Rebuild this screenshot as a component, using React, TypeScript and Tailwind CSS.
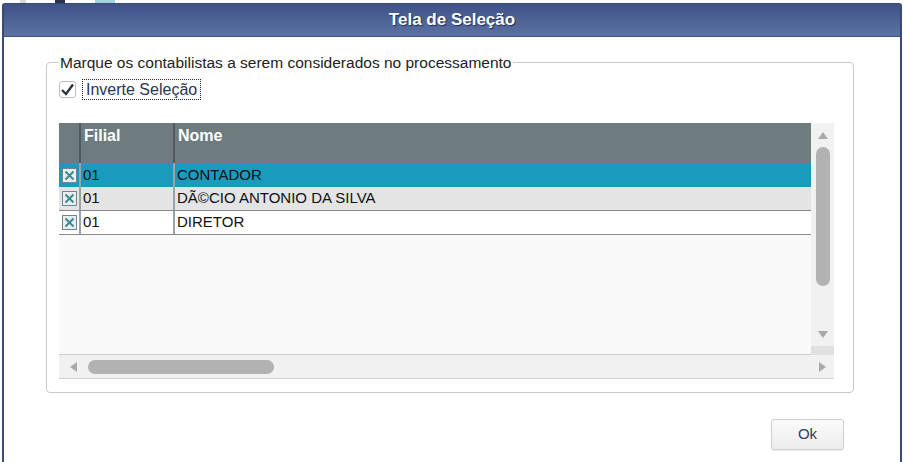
import React from "react";

const rows = [
  { filial: "01", nome: "CONTADOR" },
  { filial: "01", nome: "DÃ©CIO ANTONIO DA SILVA" },
  { filial: "01", nome: "DIRETOR" },
];

function XBox() {
  return (
    <svg width="15" height="15" viewBox="0 0 15 15">
      <rect x="0.5" y="0.5" width="14" height="14" fill="#e8eef0" stroke="#6f8790" />
      <path d="M3.5 3.5 L11.5 11.5 M11.5 3.5 L3.5 11.5" stroke="#3c8a8c" strokeWidth="2" />
    </svg>
  );
}

export default function App() {
  return (
    <div
      className="w-[905px] h-[462px] bg-white relative overflow-hidden"
      style={{ fontFamily: '"Liberation Sans", Arial, sans-serif' }}
    >
      {/* fragmentos da janela de trás */}
      <div className="h-[3px] flex">
        <div className="ml-[20px] w-[6px] bg-[#d8d8d8]" />
        <div className="ml-[29px] w-[10px] bg-[#2a3050]" />
        <div className="ml-[30px] w-[20px] bg-[#9ed3df]" />
      </div>

      <div className="ml-[2px] mr-[3px] h-[459px] flex flex-col border-l-2 border-r-2 border-t border-[#3a4a70] rounded-tl-[3px] rounded-tr-[3px]">
        {/* Barra de título */}
        <div className="h-[33px] shrink-0 flex items-center justify-center bg-gradient-to-b from-[#3f5288] to-[#5d72a3] border-b border-[#41527f]">
          <span
            className="text-white font-bold text-[17px]"
            style={{ textShadow: "1px 1px 1px #1d2a4a" }}
          >
            Tela de Seleção
          </span>
        </div>

        <div className="flex-1 flex flex-col px-[42px] pt-[17px] text-[#333] text-[15px]">
          {/* Group box */}
          <fieldset className="border border-[#c8c8c8] rounded-[4px] w-[808px] h-[339px] px-[12px] pt-0 pb-[12px] m-0">
            <legend className="ml-[-1px] px-[2px] text-[15.5px] leading-[17px] text-[#222]">
              Marque os contabilistas a serem considerados no processamento
            </legend>

            <div className="flex items-center gap-[6px] mt-[7px] h-[22px]">
              <div className="w-[17px] h-[17px] border border-[#bdbdbd] rounded-[3px] bg-white flex items-center justify-center">
                <svg width="15" height="13" viewBox="0 0 15 13">
                  <path d="M2 7 L6 11 L13 1.5" fill="none" stroke="#2b3540" strokeWidth="2.4" />
                </svg>
              </div>
              <span className="border border-dotted border-[#222] px-[3px] text-[16px] leading-[19px] text-[#2c3650]">
                Inverte Seleção
              </span>
            </div>

            {/* Grid */}
            <div className="mt-[23px] w-[775px] h-[256px] flex flex-col">
              <div className="flex flex-1 min-h-0">
                <div className="flex-1 flex flex-col bg-[#f9f9f9] border-b border-[#c9cfd0]">
                  <div className="flex h-[40px] bg-[#6e7b7f] text-white font-bold text-[16px]">
                    <div className="w-[22px] border-r-2 border-[#4f5a5d]" />
                    <div className="w-[94px] pl-[3px] pt-[1px] border-r-2 border-[#4f5a5d]">Filial</div>
                    <div className="flex-1 pl-[3px] pt-[1px]">Nome</div>
                  </div>
                  {rows.map((r, i) => (
                    <div
                      key={i}
                      className={
                        "flex h-[24px] items-center text-[15px] text-[#111] " +
                        (i === 0
                          ? "bg-[#1a9bbd]"
                          : i === 1
                          ? "bg-[#e4e4e4] border-b border-[#8a8a8a]"
                          : "bg-white border-b border-[#8a8a8a]")
                      }
                    >
                      <div className="w-[22px] h-full flex items-center justify-center border-r-2 border-[#9aa3a6]">
                        <XBox />
                      </div>
                      <div className="w-[94px] h-full flex items-center pl-[2px] border-r-2 border-[#9aa3a6]">{r.filial}</div>
                      <div className="flex-1 pl-[2px]">{r.nome}</div>
                    </div>
                  ))}
                </div>
                {/* scroll vertical */}
                <div className="w-[23px] bg-[#f1f1f1] flex flex-col items-center">
                  <div className="h-[24px] flex items-center justify-center">
                    <svg width="10" height="7" viewBox="0 0 10 7"><path d="M5 0 L10 7 L0 7 Z" fill="#a9a9a9" /></svg>
                  </div>
                  <div className="w-[14px] h-[139px] rounded-full bg-[#b2b2b2]" />
                  <div className="flex-1" />
                  <div className="h-[24px] flex items-center justify-center">
                    <svg width="10" height="7" viewBox="0 0 10 7"><path d="M0 0 L10 0 L5 7 Z" fill="#a9a9a9" /></svg>
                  </div>
                  <div className="h-[9px] w-full bg-[#e0e0e0]" />
                </div>
              </div>
              {/* scroll horizontal */}
              <div className="h-[24px] bg-[#f1f1f1] border-b border-[#d0d0d0] flex items-center">
                <div className="w-[29px] flex items-center justify-center">
                  <svg width="7" height="10" viewBox="0 0 7 10"><path d="M7 0 L7 10 L0 5 Z" fill="#a9a9a9" /></svg>
                </div>
                <div className="w-[186px] h-[14px] rounded-full bg-[#b2b2b2]" />
                <div className="flex-1" />
                <div className="w-[24px] flex items-center justify-center">
                  <svg width="7" height="10" viewBox="0 0 7 10"><path d="M0 0 L7 5 L0 10 Z" fill="#a9a9a9" /></svg>
                </div>
              </div>
            </div>
          </fieldset>

          <div className="flex justify-end w-[808px] mt-[26px] pr-[10px]">
            <button className="w-[73px] h-[31px] rounded-[3px] border border-[#cfcfcf] bg-gradient-to-b from-[#fbfbfb] to-[#ececec] text-[15px] text-[#2e3f5c] shadow-[0_1px_1px_rgba(0,0,0,0.08)]">
              Ok
            </button>
          </div>
        </div>
      </div>
    </div>
  );
}
